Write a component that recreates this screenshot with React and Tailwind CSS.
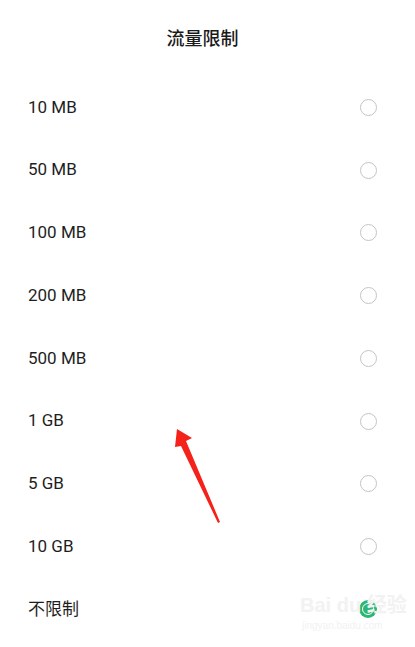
import React from "react";

const items = ["10 MB", "50 MB", "100 MB", "200 MB", "500 MB", "1 GB", "5 GB", "10 GB", "不限制"];

export default function App() {
  return (
    <div
      className="relative w-[415px] h-[647px] bg-white overflow-hidden"
      style={{ fontFamily: 'Roboto, "Noto Sans CJK SC", sans-serif' }}
    >
      <div className="h-[76px] flex items-center justify-center pr-[10px] pb-[2px]">
        <span className="text-[18px] text-[#1a1a1a] font-medium" style={{ fontFamily: '"Noto Sans CJK SC", sans-serif' }}>
          流量限制
        </span>
      </div>
      {items.map((t, i) => (
        <div key={t} className="h-[62.75px] flex items-center justify-between pl-[28px] pr-[38px]">
          <span className="text-[17px] text-[#1e1e1e]">{t}</span>
          {i === items.length - 1 ? (
            <span className="w-[18px] h-[18px] rounded-full bg-[#2bb673] flex items-center justify-center">
              <span className="w-[12px] h-[12px] rounded-full border-[1.5px] border-white bg-[#2bb673]"></span>
            </span>
          ) : (
            <span className="w-[17px] h-[17px] rounded-full border-[1.5px] border-[#c4c4c4]"></span>
          )}
        </div>
      ))}
      <svg className="absolute left-0 top-0 pointer-events-none" width="415" height="647">
        <polygon points="177,429 192,438 186,441 220,522 218,523 181,446 175,447" fill="#f5221b" />
      </svg>
      <div className="absolute left-[300px] top-[595px] pointer-events-none flex flex-col items-start whitespace-nowrap">
        <span className="text-[20px] font-bold text-[#f2f2f2] leading-none" style={{ fontFamily: '"Liberation Sans", "Noto Sans CJK SC", sans-serif' }}>Bai du 经验</span>
        <span className="text-[10px] text-[#f2f2f2] leading-none mt-[6px] ml-[2px]" style={{ fontFamily: '"Liberation Sans", sans-serif' }}>jingyan.baidu.com</span>
      </div>
    </div>
  );
}
